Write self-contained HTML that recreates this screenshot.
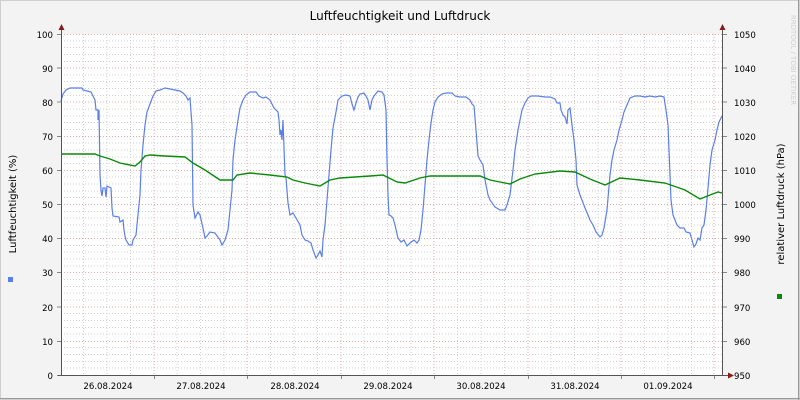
<!DOCTYPE html>
<html><head><style>body{margin:0;background:#f3f3f3}svg{display:block}text{font-family:"DejaVu Sans","Liberation Sans",sans-serif;font-size:8.6px;fill:#000}</style></head><body>
<svg width="800" height="400" xmlns="http://www.w3.org/2000/svg">
<rect x="0" y="0" width="800" height="400" fill="#f3f3f3"/>
<rect x="0.5" y="0.5" width="799" height="399" fill="none" stroke="#cfcfcf"/>
<line x1="0" y1="398.5" x2="800" y2="398.5" stroke="#9a9a9a"/>
<line x1="798.5" y1="0" x2="798.5" y2="400" stroke="#9a9a9a"/>
<rect x="61" y="34" width="662" height="341" fill="#fff"/>
<g id="grid" stroke-width="1" shape-rendering="crispEdges">
<g stroke="#d0d0d0" stroke-dasharray="1,2">
<path d="M61 368.2H723M61 361.4H723M61 354.5H723M61 347.7H723M61 334.1H723M61 327.3H723M61 320.4H723M61 313.6H723M61 300H723M61 293.2H723M61 286.3H723M61 279.5H723M61 265.9H723M61 259.1H723M61 252.2H723M61 245.4H723M61 231.8H723M61 225H723M61 218.1H723M61 211.3H723M61 197.7H723M61 190.9H723M61 184H723M61 177.2H723M61 163.6H723M61 156.8H723M61 149.9H723M61 143.1H723M61 129.5H723M61 122.7H723M61 115.8H723M61 109H723M61 95.4H723M61 88.6H723M61 81.7H723M61 74.9H723M61 61.3H723M61 54.5H723M61 47.6H723M61 40.8H723"/>
<path d="M83.5 34V375M107 34V375M130.5 34V375M177 34V375M200.5 34V375M224 34V375M270.5 34V375M294 34V375M317.5 34V375M364 34V375M387.5 34V375M411 34V375M457.5 34V375M481 34V375M504.5 34V375M551 34V375M574.5 34V375M598 34V375M644.5 34V375M668 34V375M691.5 34V375"/>
</g>
<g stroke="#e8a8a8" stroke-dasharray="1,2">
<path d="M61 341.5H723M61 307.2H723M61 272.7H723M61 238.6H723M61 204.5H723M61 170.4H723M61 136.3H723M61 102.2H723M61 68.1H723M61 34.5H723"/>
<path d="M154 34V375M247 34V375M341 34V375M434 34V375M528 34V375M621 34V375M714 34V375"/>
</g>
<g stroke="#888"><path d="M57 375.5H61M57 341.5H61M57 307.2H61M57 272.7H61M57 238.6H61M57 204.5H61M57 170.4H61M57 136.3H61M57 102.2H61M57 68.1H61M57 34.5H61"/>
<path d="M723 375.5H727M723 341.5H727M723 307.2H727M723 272.7H727M723 238.6H727M723 204.5H727M723 170.4H727M723 136.3H727M723 102.2H727M723 68.1H727M723 34.5H727"/>
<path d="M154.5 375V379M247.5 375V379M341.5 375V379M434.5 375V379M528.5 375V379M621.5 375V379M714.5 375V379"/></g>
</g>
<polyline fill="none" stroke="#5b7fe8" stroke-width="1.2" points="61,101 63,94 66,90 70,88 82,88 83,90 91,92 93,96 95,100 96,110 98,110 98,120 99,110 100,175 101,190 102,196 103,188 105,188 106,197 107,186 111,188 112,208 113,216 119,217 120,222 123,220 124,230 125,236 126,240 129,245 132,245 133,240 136,235 138,215 140,195 141,170 143,145 145,125 147,112 150,104 153,96 156,91 160,90 165,88 170,89 175,90 180,91 183,93 186,96 188,100 190,98 191,112 192,125 193,205 195,218 198,212 200,215 203,228 205,238 207,236 210,232 215,233 220,240 222,245 225,240 228,230 230,210 232,190 233,160 235,140 238,120 240,108 243,100 246,95 250,92 256,92 259,96 263,98 266,97 270,100 272,104 274,108 278,112 279,120 280,135 281,130 282,140 283,120 285,175 286,178 288,203 290,215 293,213 296,218 300,225 302,235 305,240 308,241 311,243 313,250 316,258 318,255 320,251 322,257 323,240 325,225 327,200 329,175 331,150 333,128 336,112 338,100 340,98 342,96 346,95 350,96 352,104 354,110 356,103 358,97 360,94 364,93 366,96 368,100 370,110 372,100 374,96 378,91 382,92 384,95 386,110 387,160 388,195 389,215 391,216 393,218 395,225 398,238 401,242 404,240 407,246 410,243 414,240 417,243 419,240 421,230 423,210 425,185 427,160 429,140 431,123 433,110 435,102 438,97 442,94 446,93 452,93 455,96 460,97 466,97 470,100 472,104 474,106 476,130 478,156 480,160 483,165 485,180 488,195 490,200 495,207 500,210 505,210 507,205 510,195 513,170 515,150 518,130 520,120 522,110 525,103 528,98 531,96 538,96 545,97 550,97 555,99 557,103 560,103 561,110 563,115 565,117 567,124 568,110 570,108 572,125 574,140 576,160 577,185 580,195 582,200 585,208 588,215 590,220 593,225 596,232 600,237 602,235 604,228 607,210 610,175 612,160 614,150 617,140 619,130 622,120 624,112 627,105 630,98 635,96 640,96 645,97 650,96 655,97 660,96 664,97 665,104 666,110 668,125 669,150 670,175 671,200 673,215 677,225 680,228 684,228 686,232 690,233 692,240 694,247 696,244 698,238 700,240 702,228 704,225 706,210 708,188 710,165 712,150 715,140 717,130 719,122 721,118 722,116"/>
<polyline fill="none" stroke="#0a8a0a" stroke-width="1.4" points="61,154 80,154 95,154 100,156 110,159 120,163 135,166 140,162 145,156 150,155 165,156 185,157 193,163 205,170 220,180 233,180 237,175 250,173 270,175 287,177 293,180 305,183 320,186 330,180 340,178 355,177 370,176 383,175 397,182 405,183 420,178 430,176 480,176 490,180 510,184 520,179 535,174 560,171 575,172 590,179 605,185 620,178 640,180 665,183 685,190 700,199 710,195 718,192 722,193"/>
<line x1="61.5" y1="30" x2="61.5" y2="376" stroke="#555"/>
<line x1="722.5" y1="30" x2="722.5" y2="376" stroke="#555"/>
<line x1="58" y1="375.5" x2="728" y2="375.5" stroke="#555"/>
<polygon points="58.5,30 64.5,30 61.5,24" fill="#8b1a1a"/>
<polygon points="719.5,30 725.5,30 722.5,24" fill="#8b1a1a"/>
<polygon points="728,372.5 728,378.5 734,375.5" fill="#8b1a1a"/>
<text x="400" y="20" text-anchor="middle" style="font-size:12px">Luftfeuchtigkeit und Luftdruck</text>
<g text-anchor="end"><text x="53" y="379">0</text><text x="53" y="345">10</text><text x="53" y="311">20</text><text x="53" y="276">30</text><text x="53" y="242">40</text><text x="53" y="208">50</text><text x="53" y="174">60</text><text x="53" y="140">70</text><text x="53" y="106">80</text><text x="53" y="72">90</text><text x="53" y="38">100</text></g>
<g><text x="734" y="379">950</text><text x="734" y="345">960</text><text x="734" y="311">970</text><text x="734" y="276">980</text><text x="734" y="242">990</text><text x="734" y="208">1000</text><text x="734" y="174">1010</text><text x="734" y="140">1020</text><text x="734" y="106">1030</text><text x="734" y="72">1040</text><text x="734" y="38">1050</text></g>
<g text-anchor="middle"><text x="108" y="389">26.08.2024</text><text x="201" y="389">27.08.2024</text><text x="295" y="389">28.08.2024</text><text x="388" y="389">29.08.2024</text><text x="481" y="389">30.08.2024</text><text x="575" y="389">31.08.2024</text><text x="668" y="389">01.09.2024</text></g>
<text transform="translate(16,204) rotate(-90)" text-anchor="middle" style="font-size:10px">Luftfeuchtigkeit (%)</text>
<text transform="translate(784,204) rotate(-90)" text-anchor="middle" style="font-size:10px">relativer Luftdruck (hPa)</text>
<rect x="8" y="277" width="5" height="5" fill="#5b7fe8"/>
<rect x="777" y="294" width="5" height="5" fill="#0a8a0a"/>
<text transform="translate(791,60) rotate(90)" text-anchor="middle" style="font-size:7px;fill:#d0d0d0">RRDTOOL / TOBI OETIKER</text>
</svg>
</body></html>
